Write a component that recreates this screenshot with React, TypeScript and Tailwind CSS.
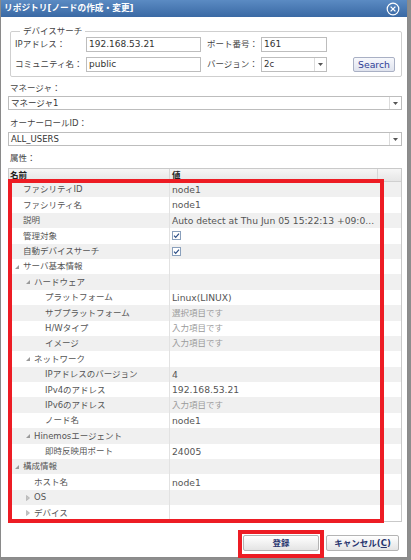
import React from "react";

type Row = {
  name: string;
  level: 0 | 1 | 2;
  value?: string;
  placeholder?: boolean;
  check?: boolean;
  tree?: "open" | "closed";
};

const rows: Row[] = [
  { name: "ファシリティID", level: 0, value: "node1" },
  { name: "ファシリティ名", level: 0, value: "node1" },
  { name: "説明", level: 0, value: "Auto detect at Thu Jun 05 15:22:13 +09:0..." },
  { name: "管理対象", level: 0, check: true },
  { name: "自動デバイスサーチ", level: 0, check: true },
  { name: "サーバ基本情報", level: 0, tree: "open" },
  { name: "ハードウェア", level: 1, tree: "open" },
  { name: "プラットフォーム", level: 2, value: "Linux(LINUX)" },
  { name: "サブプラットフォーム", level: 2, value: "選択項目です", placeholder: true },
  { name: "H/Wタイプ", level: 2, value: "入力項目です", placeholder: true },
  { name: "イメージ", level: 2, value: "入力項目です", placeholder: true },
  { name: "ネットワーク", level: 1, tree: "open" },
  { name: "IPアドレスのバージョン", level: 2, value: "4" },
  { name: "IPv4のアドレス", level: 2, value: "192.168.53.21" },
  { name: "IPv6のアドレス", level: 2, value: "入力項目です", placeholder: true },
  { name: "ノード名", level: 2, value: "node1" },
  { name: "Hinemosエージェント", level: 1, tree: "open" },
  { name: "即時反映用ポート", level: 2, value: "24005" },
  { name: "構成情報", level: 0, tree: "open" },
  { name: "ホスト名", level: 1, value: "node1" },
  { name: "OS", level: 1, tree: "closed" },
  { name: "デバイス", level: 1, tree: "closed" },
];

const indent = ["pl-[14px]", "pl-[25px]", "pl-[36px]"];

const Arrow = () => (
  <svg width="5" height="3" viewBox="0 0 5 3">
    <path d="M0 0H5L2.5 3Z" fill="#555" />
  </svg>
);

const Select = ({ value, className }: { value: string; className: string }) => (
  <div className={`flex items-stretch border border-[#bdbdbd] bg-white ${className}`}>
    <span className="flex-1 flex items-center pl-[2px] text-[#333] truncate">{value}</span>
    <span className="w-[12px] border-l border-[#dcdcdc] flex items-center justify-center">
      <Arrow />
    </span>
  </div>
);

const Check = () => (
  <svg width="9" height="9" viewBox="0 0 9 9">
    <rect x="0.5" y="0.5" width="8" height="8" fill="#fff" stroke="#8aa0bc" />
    <path d="M2 4.6L3.7 6.3L7 2.6" fill="none" stroke="#2d4f86" strokeWidth="1.2" />
  </svg>
);

const TreeIcon = ({ open }: { open: boolean }) =>
  open ? (
    <svg width="4" height="4" viewBox="0 0 4 4">
      <path d="M4 0V4H0Z" fill="#9a9a9a" />
    </svg>
  ) : (
    <svg width="4" height="6" viewBox="0 0 4 6">
      <path d="M0.5 0.5L3.5 3L0.5 5.5Z" fill="#c4c4c4" stroke="#a8a8a8" strokeWidth="0.6" />
    </svg>
  );

const Button = ({ children, className }: { children: React.ReactNode; className: string }) => (
  <button
    className={`h-[16px] rounded-[2px] border border-[#b4b4b4] bg-gradient-to-b from-white to-[#e4e4e4] text-[#26346e] font-bold flex items-center justify-center ${className}`}
  >
    {children}
  </button>
);

export default function App() {
  return (
    <div className="w-[411px] h-[560px] bg-[#8d8d8d] overflow-hidden text-[8.5px] leading-none font-['DejaVu_Sans','Noto_Sans_CJK_JP',sans-serif]">
      <div className="relative w-[408px] h-[558px] bg-white border-x border-b border-[#8a8a8a] flex flex-col">
        {/* title bar */}
        <div className="h-[17px] shrink-0 bg-gradient-to-b from-[#5b8bc3] to-[#3a69a4] flex items-center justify-between pl-[3px] pr-[7px]">
          <span className="text-white font-bold text-[8.7px]">リポジトリ[ノードの作成・変更]</span>
          <svg width="14" height="14" viewBox="0 0 14 14">
            <circle cx="7" cy="7" r="5.8" fill="none" stroke="#fff" strokeWidth="1.2" />
            <path d="M4.6 4.6L9.4 9.4M9.4 4.6L4.6 9.4" stroke="#fff" strokeWidth="1.3" />
          </svg>
        </div>

        <div className="flex flex-col pl-[7px] pr-[5px] text-[#444]">
          {/* device search */}
          <fieldset className="mt-[8px] ml-[2px] border border-[#cfcfcf] rounded-[2px] pl-[4px] pb-[4px] flex flex-col gap-[5px]">
            <legend className="ml-[5px] px-[3px] leading-[12px] text-[#444]">デバイスサーチ</legend>
            <div className="flex items-center h-[15px]">
              <span className="w-[71px]">IPアドレス：</span>
              <div className="w-[115px] h-full border border-[#bdbdbd] flex items-center pl-[2px] text-[#333] text-[9px]">
                192.168.53.21
              </div>
              <span className="w-[54px] ml-[6px]">ポート番号：</span>
              <div className="w-[66px] h-full border border-[#bdbdbd] flex items-center pl-[2px] text-[#333] text-[9px]">
                161
              </div>
            </div>
            <div className="flex items-center h-[15px]">
              <span className="w-[71px]">コミュニティ名：</span>
              <div className="w-[115px] h-full border border-[#bdbdbd] flex items-center pl-[2px] text-[#333] text-[9px]">
                public
              </div>
              <span className="w-[54px] ml-[6px]">バージョン：</span>
              <Select value="2c" className="w-[66px] h-full" />
              <button className="ml-[26px] w-[42px] h-full rounded-[2px] border border-[#a9b0c4] bg-gradient-to-b from-[#f7f8fc] to-[#dfe3ee] text-[#2e3c96] text-[9.3px] flex items-center justify-center">
                Search
              </button>
            </div>
          </fieldset>

          <span className="mt-[5px] h-[12px] flex items-center pl-[2px]">マネージャ：</span>
          <Select value="マネージャ1" className="mt-[2px] h-[14px]" />
          <span className="mt-[7px] h-[12px] flex items-center pl-[2px]">オーナーロールID：</span>
          <Select value="ALL_USERS" className="mt-[3px] h-[14px]" />
          <span className="mt-[6px] h-[12px] flex items-center pl-[2px]">属性：</span>

          {/* property table */}
          <div className="mt-[4px] h-[354px] border border-[#c9c9c9] flex flex-col overflow-hidden">
            <div className="h-[13px] shrink-0 flex bg-gradient-to-b from-[#f6f6f6] to-[#e6e6e6] border-b border-[#d0d0d0] text-[#222] font-bold">
              <span className="w-[161px] border-r border-[#d6d6d6] flex items-center pl-[1px]">名前</span>
              <span className="w-[208px] border-r border-[#d6d6d6] flex items-center pl-[2px]">値</span>
              <span className="flex-1" />
            </div>
            <div className="flex flex-col">
              {rows.map((r, i) => (
                <div
                  key={i}
                  className={`h-[15.4px] shrink-0 flex ${i % 2 === 0 ? "bg-[#f0f0f0]" : "bg-white"}`}
                >
                  <div className={`relative w-[161px] border-r border-[#e2e2e2] flex items-center text-[#555] ${indent[r.level]}`}>
                    {r.tree && (
                      <span className="absolute top-0 bottom-0 flex items-center -ml-[8px]">
                        <TreeIcon open={r.tree === "open"} />
                      </span>
                    )}
                    <span className="whitespace-nowrap">{r.name}</span>
                  </div>
                  <div
                    className={`flex-1 flex items-center pl-[2px] whitespace-nowrap overflow-hidden ${
                      r.placeholder ? "text-[#9a9a9a] text-[8.5px]" : "text-[#555] text-[9.2px]"
                    }`}
                  >
                    {r.check ? <Check /> : r.value}
                  </div>
                </div>
              ))}
            </div>
          </div>

          {/* buttons */}
          <div className="mt-[13px] flex justify-end gap-[7px] pr-[3px]">
            <Button className="w-[76px]">登録</Button>
            <Button className="w-[73px]">
              キャンセル(<span className="underline">C</span>)
            </Button>
          </div>
        </div>

        {/* red annotation boxes */}
        <div className="absolute left-[7px] top-[179px] w-[376px] h-[344px] border-[4px] border-[#ed1c24] pointer-events-none" />
        <div className="absolute left-[237px] top-[530px] w-[86px] h-[28px] border-[4px] border-[#ed1c24] pointer-events-none" />
      </div>
    </div>
  );
}
